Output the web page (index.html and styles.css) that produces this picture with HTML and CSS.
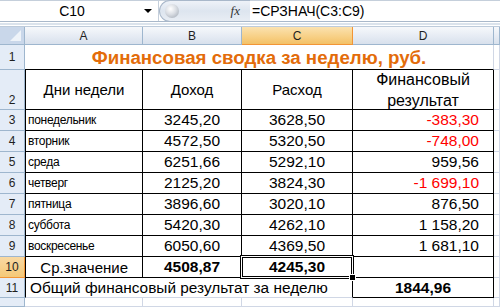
FILE: index.html
```html
<!DOCTYPE html>
<html lang="ru">
<head>
<meta charset="utf-8">
<link rel="stylesheet" href="styles.css">
</head>
<body>
<div class="app">
  <div class="fbar">
    <div class="namebox"><span class="nb-text">C10</span><span class="nb-arrow"></span></div>
    <div class="fxbox"><span class="fx-ball"></span><span class="fx">fx</span></div>
    <div class="formula">=СРЗНАЧ(C3:C9)</div>
  </div>
  <div class="strip"></div>
  <div class="sheet">
    <div class="corner"><span class="corner-tri"></span></div>
    <div class="ch">A</div>
    <div class="ch">B</div>
    <div class="ch sel">C</div>
    <div class="ch">D</div>
    <div class="ch"></div>

    <div class="rh">1</div>
    <div class="c title">Финансовая сводка за неделю, руб.</div>
    <div class="c"></div>

    <div class="rh rh-bottom">2</div>
    <div class="c b bl head">Дни недели</div>
    <div class="c b head">Доход</div>
    <div class="c b head">Расход</div>
    <div class="c b head two">Финансовый<br>результат</div>
    <div class="c"></div>

    <div class="rh">3</div>
    <div class="c b bl day">понедельник</div>
    <div class="c b num">3245,20</div>
    <div class="c b num">3628,50</div>
    <div class="c b res neg">-383,30</div>
    <div class="c"></div>

    <div class="rh">4</div>
    <div class="c b bl day">вторник</div>
    <div class="c b num">4572,50</div>
    <div class="c b num">5320,50</div>
    <div class="c b res neg">-748,00</div>
    <div class="c"></div>

    <div class="rh">5</div>
    <div class="c b bl day">среда</div>
    <div class="c b num">6251,66</div>
    <div class="c b num">5292,10</div>
    <div class="c b res">959,56</div>
    <div class="c"></div>

    <div class="rh">6</div>
    <div class="c b bl day">четверг</div>
    <div class="c b num">2125,20</div>
    <div class="c b num">3824,30</div>
    <div class="c b res neg">-1 699,10</div>
    <div class="c"></div>

    <div class="rh">7</div>
    <div class="c b bl day">пятница</div>
    <div class="c b num">3896,60</div>
    <div class="c b num">3020,10</div>
    <div class="c b res">876,50</div>
    <div class="c"></div>

    <div class="rh">8</div>
    <div class="c b bl day">суббота</div>
    <div class="c b num">5420,30</div>
    <div class="c b num">4262,10</div>
    <div class="c b res">1 158,20</div>
    <div class="c"></div>

    <div class="rh">9</div>
    <div class="c b bl day">воскресенье</div>
    <div class="c b num">6050,60</div>
    <div class="c b num">4369,50</div>
    <div class="c b res">1 681,10</div>
    <div class="c"></div>

    <div class="rh sel">10</div>
    <div class="c b bl avg">Ср.значение</div>
    <div class="c b num bold">4508,87</div>
    <div class="c b num bold active">4245,30<span class="handle"></span></div>
    <div class="c b"></div>
    <div class="c"></div>

    <div class="rh">11</div>
    <div class="c bl total">Общий финансовый результат за неделю</div>
    <div class="c b num bold">1844,96</div>
    <div class="c"></div>

    <div class="rh"></div>
    <div class="c"></div>
    <div class="c"></div>
    <div class="c"></div>
    <div class="c"></div>
    <div class="c"></div>
  </div>
</div>
</body>
</html>
```

FILE: styles.css
```css
* { box-sizing: border-box; }
html, body { margin: 0; padding: 0; background: #fff; }
body {
  width: 500px;
  height: 307px;
  overflow: hidden;
  font-family: "Liberation Sans", Arial, sans-serif;
  color: #000;
}
.app { width: 500px; height: 307px; overflow: hidden; }

/* formula bar */
.fbar {
  display: flex;
  height: 22px;
  background: #fff;
  border-top: 1px solid #c5cfdb;
  border-bottom: 1px solid #a9b8ca;
}
.namebox {
  width: 159px;
  display: flex;
  align-items: center;
  position: relative;
  border-right: 1px solid #c5cfdb;
}
.nb-text {
  flex: 1;
  text-align: center;
  font-size: 14px;
  padding-right: 0;
}
.nb-arrow {
  width: 0; height: 0;
  border-left: 4px solid transparent;
  border-right: 4px solid transparent;
  border-top: 4px solid #000;
  margin-right: 6px;
}
.fxbox {
  width: 91px;
  display: flex;
  align-items: center;
  justify-content: space-between;
  margin-top: -1px;
  margin-bottom: -1px;
  padding: 0 10px 0 5px;
  border: 1px solid #a9b8ca;
  border-right: none;
  border-radius: 12px 0 0 12px;
  background: linear-gradient(#eef2f8, #dde5ef 50%, #e8edf4);
}
.fx-ball {
  width: 14px; height: 14px;
  border-radius: 50%;
  background: radial-gradient(circle at 40% 35%, #ffffff 0%, #d9dde3 45%, #9aa3ae 100%);
}
.fx {
  font-family: "Liberation Serif", "Times New Roman", serif;
  font-style: italic;
  font-size: 13px;
  color: #333;
}
.formula {
  flex: 1;
  display: flex;
  align-items: center;
  padding-left: 2px;
  font-size: 14px;
}
.strip {
  height: 5px;
  background: #fff;
  border-bottom: 1px solid #bdcbdb;
  position: relative;
}
.strip::before {
  content: "";
  position: absolute;
  left: 0; right: 0; top: 1px;
  height: 2px;
  background: #dbe3ec;
}

/* sheet */
.sheet {
  display: grid;
  grid-template-columns: 25px 118px 99px 111px 141px 6px;
  grid-template-rows: 18px 25px 40px repeat(8, 21px) 20px 9px;
}
.corner {
  background: #c9d7ea;
  border-right: 1px solid #9eb6ce;
  border-bottom: 1px solid #9eb6ce;
  position: relative;
}
.corner-tri {
  position: absolute;
  right: 3px; bottom: 3px;
  width: 0; height: 0;
  border-left: 11px solid transparent;
  border-bottom: 11px solid #eef3f9;
}
.ch {
  background: linear-gradient(#f6f8fb, #e4eaf3 60%, #d8e0ec);
  border-right: 1px solid #9eb6ce;
  border-bottom: 1px solid #9eb6ce;
  font-size: 12px;
  color: #1f1f1f;
  display: flex;
  align-items: center;
  justify-content: center;
}
.ch.sel {
  background: linear-gradient(#fbe2b0, #f7cf83 60%, #f3c167);
  border-right-color: #f29536;
  border-bottom-color: #f29536;
}
.rh {
  background: #e4ecf7;
  border-right: 1px solid #9eb6ce;
  border-bottom: 1px solid #9eb6ce;
  font-size: 12px;
  color: #1f1f1f;
  display: flex;
  align-items: center;
  justify-content: center;
}
.rh-bottom { align-items: flex-end; padding-bottom: 2px; }
.rh.sel {
  background: linear-gradient(#f9d9a3, #f5c978);
  border-right-color: #f29536;
  border-bottom-color: #f29536;
}
.c {
  border-right: 1px solid #d0d7e5;
  border-bottom: 1px solid #d0d7e5;
  font-size: 15px;
  display: flex;
  align-items: center;
  white-space: nowrap;
  overflow: visible;
  position: relative;
}
.c.b {
  border-right-color: #000;
  border-bottom-color: #000;
}
.c.bl { border-left: 1px solid #000; }

.title {
  grid-column: span 4;
  justify-content: center;
  border-bottom-color: #000;
  color: #e36c0a;
  font-weight: bold;
  font-size: 18.7px;
  padding-top: 1px;
}
.head { justify-content: center; font-size: 15px; }
.head.two {
  flex-direction: column;
  line-height: 21px;
  text-align: center;
  font-size: 16px;
  padding-top: 1px;
}
.day { font-size: 12px; letter-spacing: -0.3px; padding-left: 2px; }
.num { justify-content: center; font-size: 15.5px; }
.res { justify-content: flex-end; padding-right: 14px; font-size: 15.5px; }
.neg { color: #ff0000; }
.bold { font-weight: bold; }
.avg { justify-content: flex-end; padding-right: 14px; }
.total {
  grid-column: span 3;
  padding-left: 4px;
  font-size: 15.4px;
  border-right-color: #000;
}

.active::after {
  content: "";
  position: absolute;
  left: -2px; top: -2px; right: -2px; bottom: -2px;
  border: 1px solid #000;
  box-shadow: inset 0 0 0 1px #fff, inset 0 0 0 2px #000;
  pointer-events: none;
}
.handle {
  position: absolute;
  right: -4px;
  bottom: -4px;
  width: 7px;
  height: 7px;
  background: #000;
  border: 1px solid #fff;
  z-index: 2;
}
```
